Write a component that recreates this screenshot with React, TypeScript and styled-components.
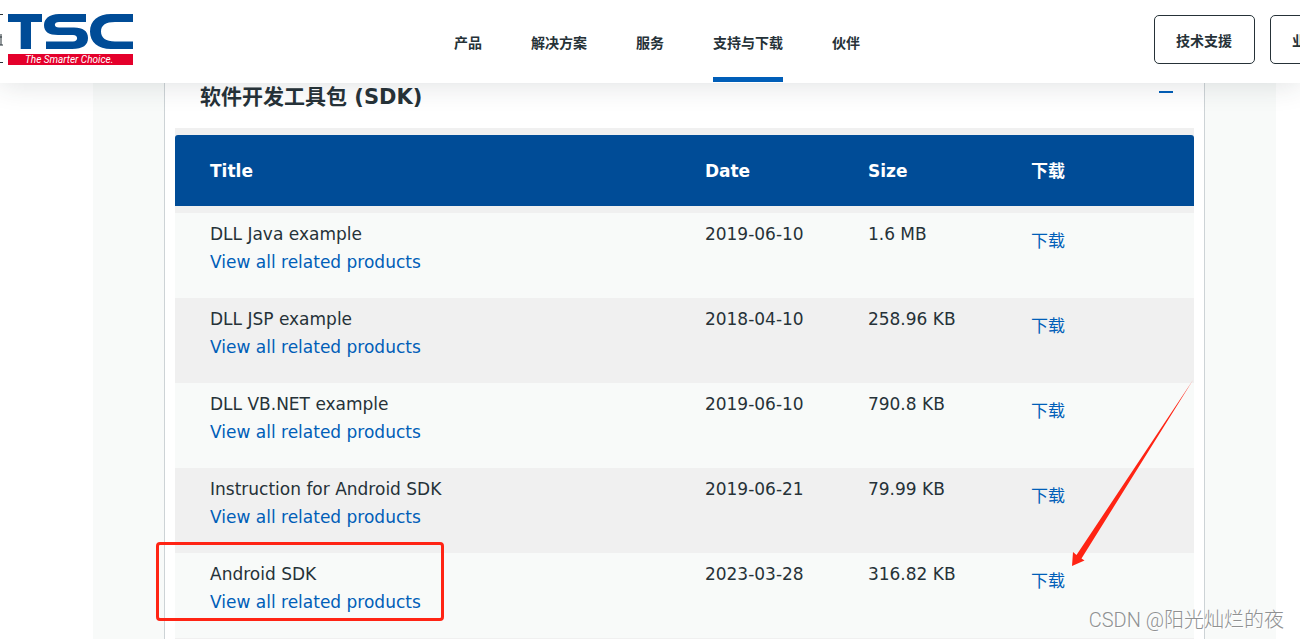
import React from "react";
import styled, { createGlobalStyle } from "styled-components";

const GlobalStyle = createGlobalStyle`
  * { box-sizing: border-box; }
  body {
    margin: 0;
    background: #fff;
    color: #263238;
    font-family: Verdana, "DejaVu Sans", "Noto Sans CJK SC", sans-serif;
    overflow-x: hidden;
  }
`;

const Page = styled.div`
  position: relative;
  overflow: hidden;
`;

const Header = styled.header`
  position: relative;
  z-index: 1;
  display: flex;
  height: 83px;
  padding-left: 8px;
  background: #fff;
  box-shadow: 0 0 30px rgba(38, 50, 56, 0.16);
`;

const EdgeFragment = styled.div`
  position: absolute;
  left: 0;
  top: 14px;
  width: 3px;
  height: 49px;
  border-top: 1px solid #263238;
  border-bottom: 1px solid #263238;
`;

const LogoLink = styled.a`
  display: block;
  flex: none;
  width: 125px;
  height: 51px;
  margin-top: 14px;
`;

const Nav = styled.nav`
  display: flex;
  gap: 49px;
  margin-left: 321px;
  height: 82px;
`;

const NavLink = styled.a<{ $active?: boolean }>`
  padding-top: 32px;
  border-bottom: 5px solid ${(p) => (p.$active ? "#005eb8" : "transparent")};
  color: #263238;
  font: 700 14px/20px "Noto Sans CJK SC", sans-serif;
  text-decoration: none;
  white-space: nowrap;
`;

const Actions = styled.div`
  display: flex;
  gap: 15px;
  width: 146px;
  margin: 15px 0 0 auto;
  overflow: hidden;
`;

const ActionButton = styled.button`
  flex: none;
  width: 101px;
  height: 49px;
  padding: 0 0 0 21px;
  border: 1px solid #263238;
  border-radius: 5px;
  background: #fff;
  color: #263238;
  font: 700 14px/20px "Noto Sans CJK SC", sans-serif;
  text-align: left;
`;

const Main = styled.main`
  margin: 0 24px 0 93px;
  padding: 0 71px;
  background: #f8faf9;
`;

const Panel = styled.section`
  padding: 0 10px;
  border: solid #cdd3d6;
  border-width: 0 1px;
  background: #fff;
`;

const PanelHead = styled.div`
  display: flex;
  justify-content: space-between;
  height: 45px;
  padding: 0 21px 0 25px;
`;

const PanelTitle = styled.h2`
  margin: 0;
  font-size: 21px;
  line-height: 28px;
`;

const CollapseButton = styled.button`
  width: 14px;
  height: 18px;
  padding: 0;
  border: 0;
  background: none;
  line-height: 0;
`;

const Sheet = styled.div`
  padding: 7px 0 1px;
  background: #f0f0f0;
`;

const Table = styled.table`
  width: 100%;
  table-layout: fixed;
  border-spacing: 0;
  font-size: 17px;
  line-height: 28px;
`;

const HeadCell = styled.th<{ $wide?: boolean }>`
  width: ${(p) => (p.$wide ? "52%" : "16%")};
  height: 71px;
  padding: 0 0 0 ${(p) => (p.$wide ? 35 : 0)}px;
  background: #004c97;
  color: #fff;
  text-align: left;
  &:first-child { border-top-left-radius: 3px; }
  &:last-child { border-top-right-radius: 3px; }
`;

const Row = styled.tr`
  background: #f8faf9;
  &:nth-child(even) { background: #f0f0f0; }
`;

const Cell = styled.td<{ $wide?: boolean; $low?: boolean }>`
  height: 85px;
  padding: ${(p) => (p.$low ? 14 : 7)}px 0 0 ${(p) => (p.$wide ? 35 : 0)}px;
  vertical-align: top;
`;

const SpacerCell = styled.td`
  height: 7px;
  padding: 0;
`;

const TextLink = styled.a<{ $block?: boolean }>`
  display: ${(p) => (p.$block ? "block" : "inline")};
  color: #005eb8;
  text-decoration: none;
`;

const Highlight = styled.div`
  position: absolute;
  left: 156px;
  top: 542px;
  width: 288px;
  height: 79px;
  border: 3px solid #ff2414;
  border-radius: 4px;
`;

const Arrow = styled.svg`
  position: absolute;
  right: 104px;
  top: 378px;
`;

const Watermark = styled.div`
  position: absolute;
  right: 16px;
  top: 606px;
  color: #8f9192;
  font: 300 20px/28px Roboto, "Noto Sans CJK SC", sans-serif;
  text-shadow: 1px 1px 0 #fff;
  white-space: nowrap;
`;

const files = [
  { title: "DLL Java example", date: "2019-06-10", size: "1.6 MB" },
  { title: "DLL JSP example", date: "2018-04-10", size: "258.96 KB" },
  { title: "DLL VB.NET example", date: "2019-06-10", size: "790.8 KB" },
  { title: "Instruction for Android SDK", date: "2019-06-21", size: "79.99 KB" },
  { title: "Android SDK", date: "2023-03-28", size: "316.82 KB" },
];

const navItems = ["产品", "解决方案", "服务", "支持与下载", "伙伴"];

function Logo() {
  return (
    <svg width="125" height="51" viewBox="0 0 125 51" role="img" aria-label="TSC">
      <g fill="#004c97">
        <path d="M0 0H34V8H23V35H12.700V8H0Z" />
        <path d="M78 0H51C41 0 36 5 36 11C36 18 41 21 50 21H65C70.500 21 70.500 27.500 65 27.500H38V35H64C75 35 80 31 80 24C80 17 75 13.500 66 13.500H51C45.500 13.500 45.500 8 51 8H78Z" />
        <path d="M125 0H103C90 0 82 7 82 17.500C82 28 90 35 103 35H125V27.500H107C98 27.500 93 24 93 17.500C93 11 98 8 107 8H125Z" />
      </g>
      <rect y="40" width="125" height="11" fill="#e4002b" />
      <text x="17" y="49" fill="#fff" fontFamily="Roboto, sans-serif" fontSize="10" fontStyle="italic" fontWeight="400">
        The Smarter Choice.
      </text>
    </svg>
  );
}

export default function App() {
  return (
    <Page>
      <GlobalStyle />
      <Header>
        <EdgeFragment>
          <svg width="3" height="49" viewBox="0 0 3 49" aria-hidden="true">
            <path d="M0 22H2M1 19V30M0 30H3" stroke="#263238" fill="none" />
          </svg>
        </EdgeFragment>
        <LogoLink href="#"><Logo /></LogoLink>
        <Nav>
          {navItems.map((item) => (
            <NavLink key={item} href="#" $active={item === "支持与下载"}>{item}</NavLink>
          ))}
        </Nav>
        <Actions>
          <ActionButton type="button">技术支援</ActionButton>
          <ActionButton type="button">业</ActionButton>
        </Actions>
      </Header>
      <Main>
        <Panel>
          <PanelHead>
            <PanelTitle>软件开发工具包 (SDK)</PanelTitle>
            <CollapseButton type="button" aria-label="收起">
              <svg width="14" height="18"><rect y="8" width="14" height="2" fill="#005eb8" /></svg>
            </CollapseButton>
          </PanelHead>
          <Sheet>
            <Table>
              <thead>
                <tr>
                  <HeadCell $wide>Title</HeadCell>
                  <HeadCell>Date</HeadCell>
                  <HeadCell>Size</HeadCell>
                  <HeadCell>下载</HeadCell>
                </tr>
              </thead>
              <tbody aria-hidden="true"><tr><SpacerCell colSpan={4} /></tr></tbody>
              <tbody>
                {files.map((f) => (
                  <Row key={f.title}>
                    <Cell $wide>
                      {f.title}
                      <TextLink $block href="#">View all related products</TextLink>
                    </Cell>
                    <Cell>{f.date}</Cell>
                    <Cell>{f.size}</Cell>
                    <Cell $low><TextLink href="#">下载</TextLink></Cell>
                  </Row>
                ))}
              </tbody>
            </Table>
          </Sheet>
        </Panel>
      </Main>
      <Highlight />
      <Arrow width="124" height="190" viewBox="0 0 124 190" aria-hidden="true">
        <path d="M121 2L4.500 177L1 174L0 188L12.500 182.500L9.500 180.500Z" fill="#ff2414" />
      </Arrow>
      <Watermark>CSDN @阳光灿烂的夜</Watermark>
    </Page>
  );
}
